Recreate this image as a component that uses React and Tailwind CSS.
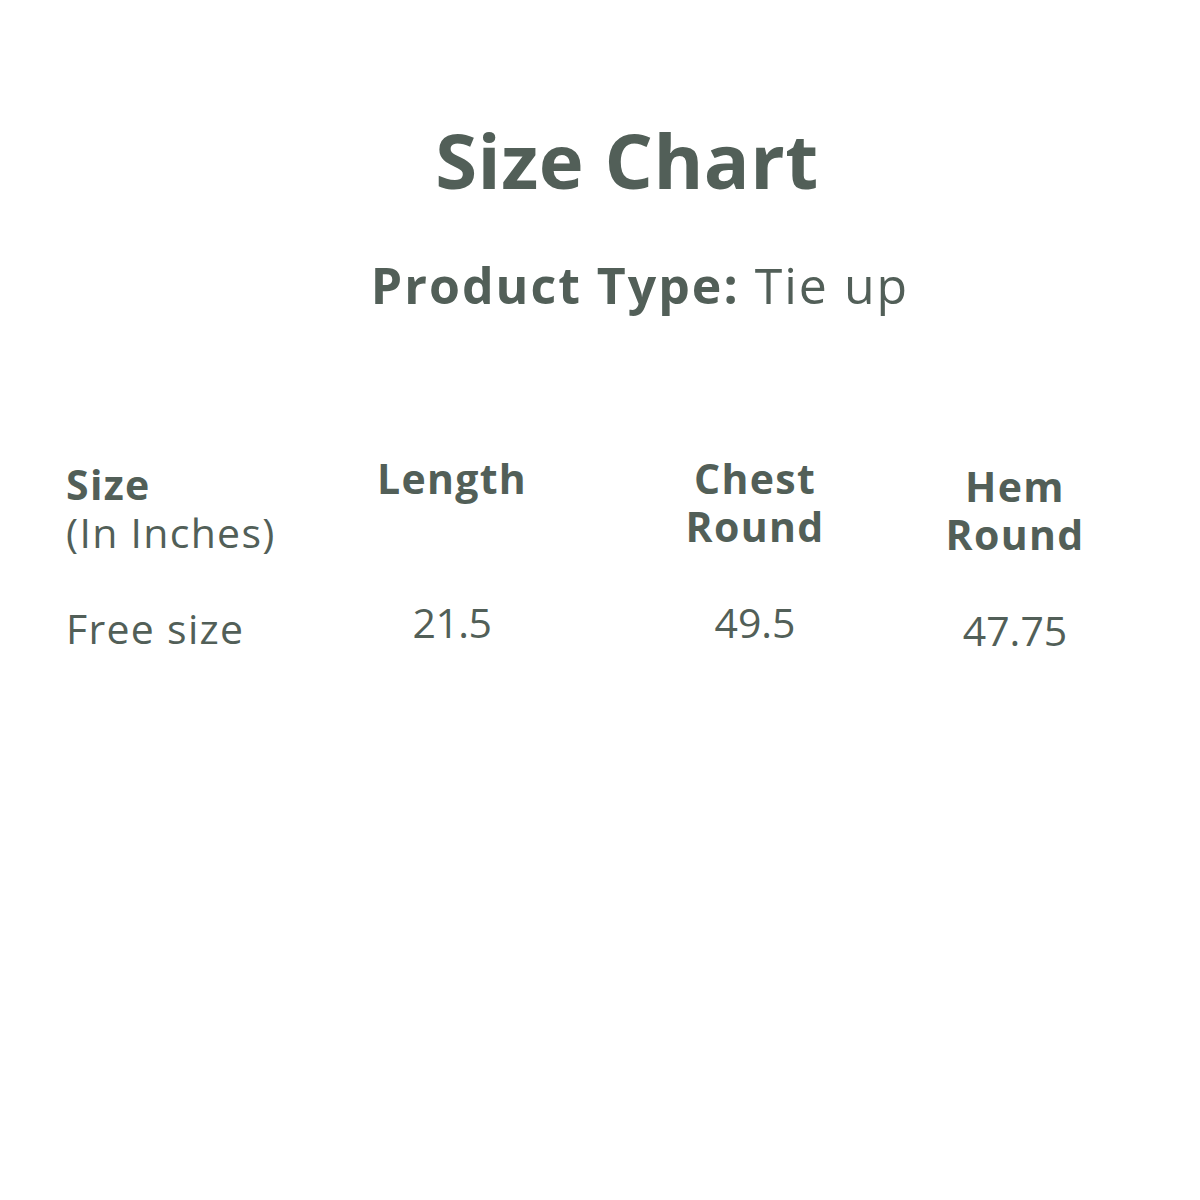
import React from 'react'

const rows = [
  { size: 'Free size', length: '21.5', chest: '49.5', hem: '47.75' },
]

export default function App() {
  return (
    <div
      className="w-[1200px] h-[1200px] bg-white text-[#525f58]"
      style={{ fontFamily: '"Open Sans", "Liberation Sans", sans-serif' }}
    >
      <div className="flex flex-col items-center pt-[112px]">
        <h1 className="text-[76px] leading-[96px] font-bold tracking-[0.5px] ml-[54px]">Size Chart</h1>
        <p className="mt-[45px] text-[50px] leading-[64px] ml-[80px] tracking-[2px]">
          <span className="font-bold">Product Type:</span> Tie up
        </p>
      </div>

      <div className="mt-[137px] grid grid-cols-[234px_304px_302px_218px] ml-[66px] text-[41px] leading-[48px] tracking-[1.3px]">
        <div className="mt-[6px]">
          <div className="font-bold">Size</div>
          <div>(In Inches)</div>
        </div>
        <div className="text-center font-bold">Length</div>
        <div className="text-center font-bold">
          <div>Chest</div>
          <div>Round</div>
        </div>
        <div className="text-center font-bold mt-[8px]">
          <div>Hem</div>
          <div>Round</div>
        </div>

        {rows.map((r) => (
          <React.Fragment key={r.size}>
            <div className="mt-[46px]">{r.size}</div>
            <div className="mt-[40px] text-center tracking-[-0.5px]">{r.length}</div>
            <div className="mt-[40px] text-center tracking-normal">{r.chest}</div>
            <div className="mt-[48px] text-center tracking-normal">{r.hem}</div>
          </React.Fragment>
        ))}
      </div>
    </div>
  )
}
